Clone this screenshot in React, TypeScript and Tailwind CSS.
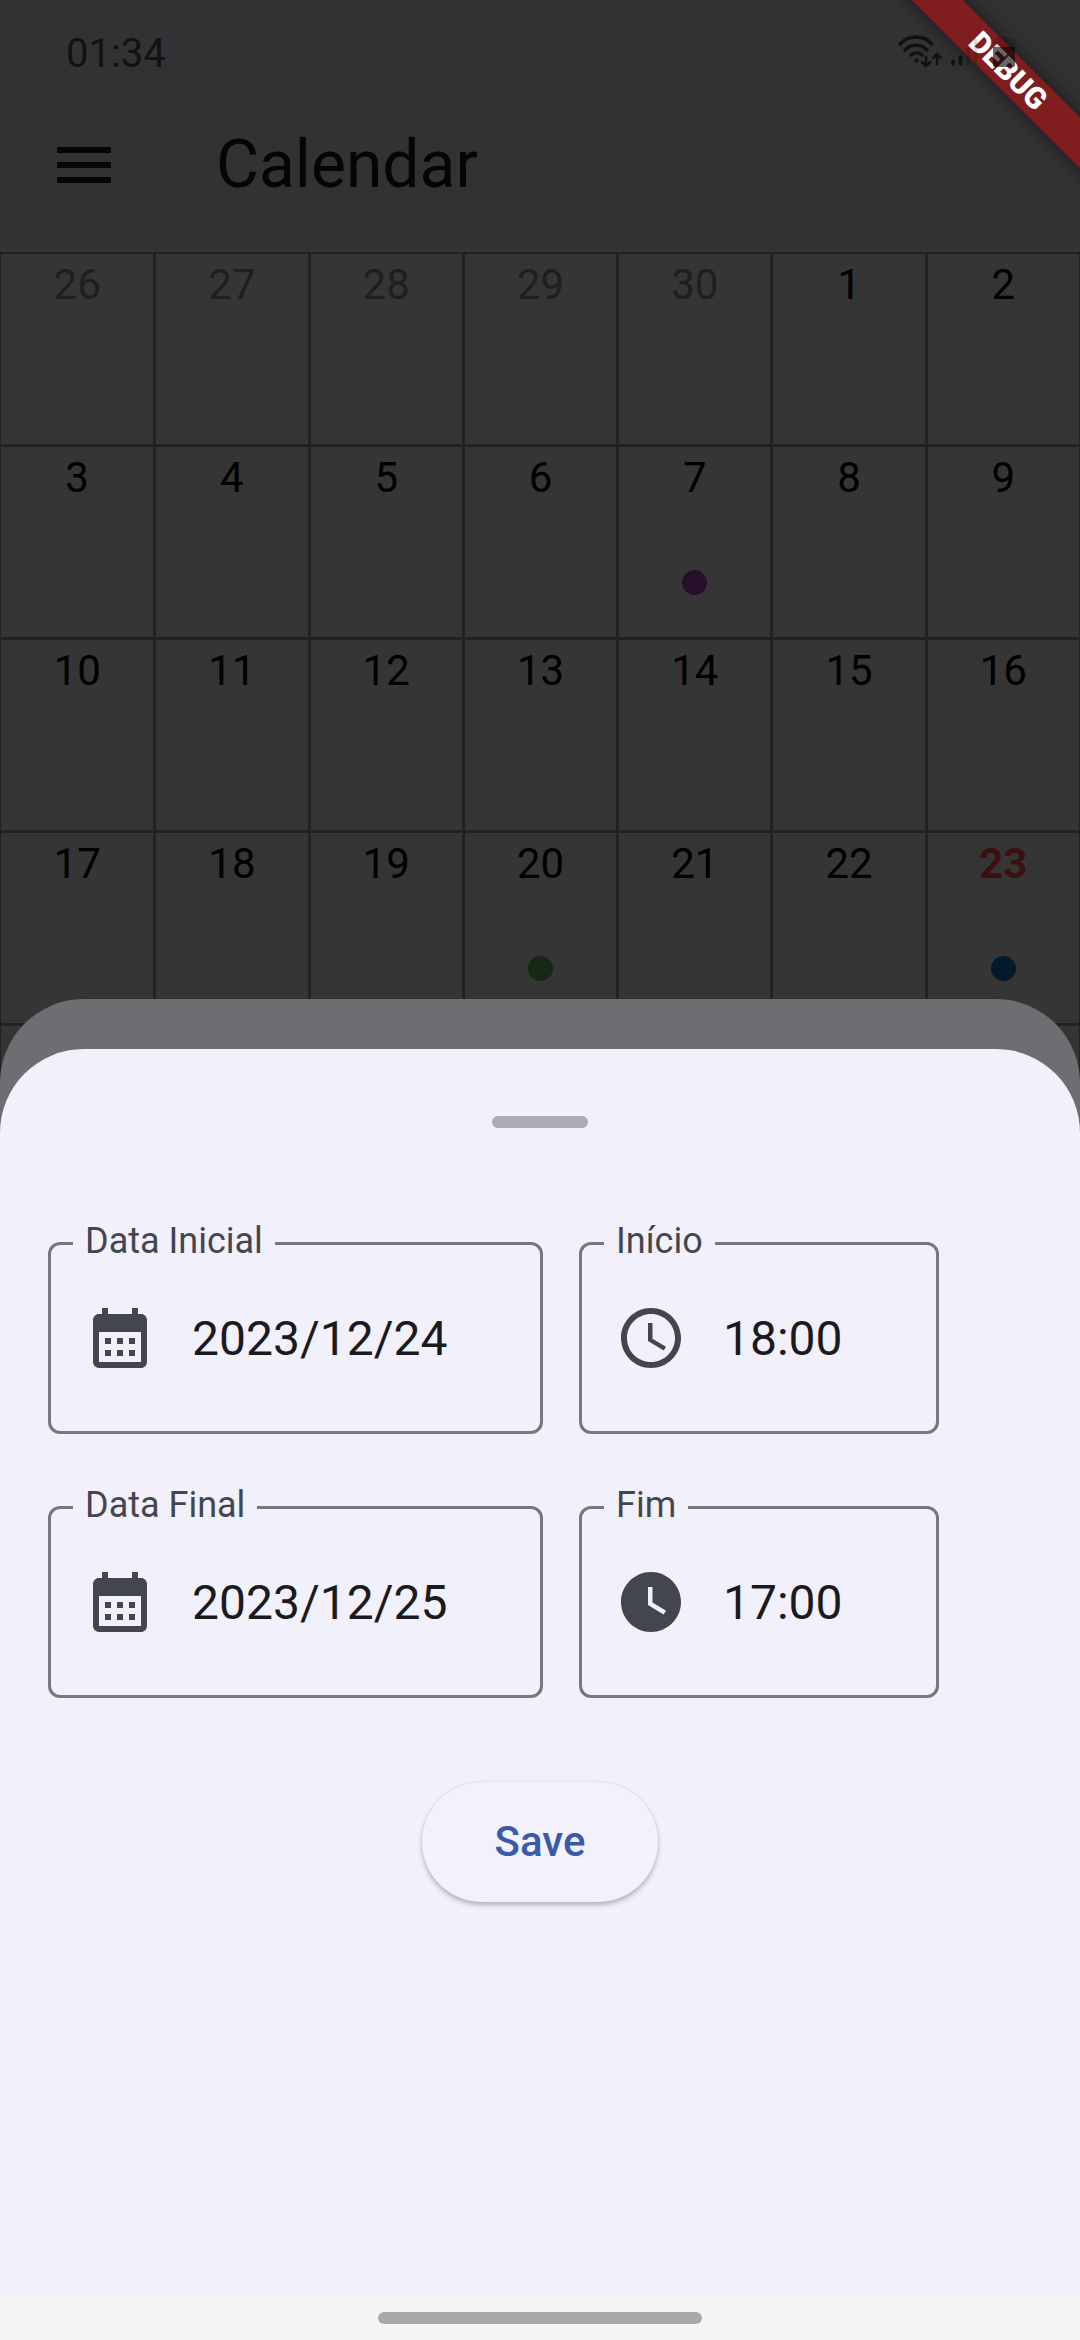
import { useState, type ReactNode } from "react";

type Day = { label: string; tone: "muted" | "normal" | "today"; dot?: string };

const muted = (n: number): Day => ({ label: String(n), tone: "muted" });
const day = (n: number, dot?: string): Day => ({ label: String(n), tone: "normal", dot });
const blank: Day = { label: "", tone: "normal" };

const weeks: Day[][] = [
  [muted(26), muted(27), muted(28), muted(29), muted(30), day(1), day(2)],
  [day(3), day(4), day(5), day(6), day(7, "bg-[#260f29]"), day(8), day(9)],
  [day(10), day(11), day(12), day(13), day(14), day(15), day(16)],
  [
    day(17),
    day(18),
    day(19),
    day(20, "bg-[#172915]"),
    day(21),
    day(22),
    { label: "23", tone: "today", dot: "bg-[#03192c]" },
  ],
  [blank, blank, blank, blank, blank, blank, blank],
];

const toneClass = {
  muted: "text-[#1f1f1f]",
  normal: "text-black",
  today: "font-bold text-[#3a110e]",
};

const calendarPath =
  "M19 4h-1V2h-2v2H8V2H6v2H5c-1.11 0-1.99.9-1.99 2L3 20a2 2 0 0 0 2 2h14c1.1 0 2-.9 2-2V6c0-1.1-.9-2-2-2zm0 16H5V10h14v10zM9 14H7v-2h2v2zm4 0h-2v-2h2v2zm4 0h-2v-2h2v2zm-8 4H7v-2h2v2zm4 0h-2v-2h2v2zm4 0h-2v-2h2v2z";
const clockPath =
  "M11.99 2C6.47 2 2 6.48 2 12s4.47 10 9.99 10C17.52 22 22 17.52 22 12S17.52 2 11.99 2zM12 20c-4.42 0-8-3.58-8-8s3.58-8 8-8 8 3.58 8 8-3.58 8-8 8zm.5-13H11v6l5.25 3.15.75-1.23-4.5-2.67z";
const clockFilledPath =
  "M12 2C6.5 2 2 6.5 2 12s4.5 10 10 10 10-4.5 10-10S17.5 2 12 2zm4.2 14.2L11 13V7h1.5v5.2l4.5 2.7-.8 1.3z";

function Icon({ d }: { d: string }) {
  return (
    <svg viewBox="0 0 24 24" className="size-[72px] shrink-0 fill-[#44464f]" aria-hidden="true">
      <path d={d} />
    </svg>
  );
}

function Field({ id, label, initial, icon }: { id: string; label: string; initial: string; icon: ReactNode }) {
  const [value, setValue] = useState(initial);
  return (
    <div className="relative flex h-48 items-center gap-9 rounded-xl border-3 border-[#767780] px-[33px]">
      <label
        htmlFor={id}
        className="absolute -top-7 left-[22px] bg-[#f2f1fb] px-3 text-[36px] leading-[48px] text-[#44464f]"
      >
        {label}
      </label>
      {icon}
      <input
        id={id}
        value={value}
        onChange={(e) => setValue(e.target.value)}
        className="w-full min-w-0 bg-transparent pt-[2px] text-[48px] leading-[72px] text-[#1b1b1f] outline-none"
      />
    </div>
  );
}

function StatusIcons() {
  return (
    <svg
      viewBox="0 0 120 36"
      className="h-9 w-[120px]"
      fill="none"
      stroke="#000"
      strokeOpacity="0.65"
      strokeLinecap="round"
      aria-hidden="true"
    >
      <path d="M3 12a22 22 0 0 1 32 0" strokeWidth="3.5" />
      <path d="M8 18a15 15 0 0 1 22 0" strokeWidth="3.5" />
      <path d="M14 23a8.500 8.500 0 0 1 11 0" strokeWidth="3.5" />
      <circle cx="19.500" cy="28.500" r="2.200" fill="#000" fillOpacity="0.65" stroke="none" />
      <path d="M29 25v9m-4-4l4 4l4-4M40 32V22m-4 4l4-4l4 4" strokeWidth="2.500" strokeLinejoin="round" />
      <path d="M56 32v-3M63.500 32v-7" strokeWidth="3.500" />
      <path d="M71 32V16M78.500 32V8" strokeWidth="3.500" strokeOpacity="0.15" />
      <path d="M100 4h10v3h8v8H96V7h4z" fill="#000" fillOpacity="0.15" stroke="none" />
      <path d="M96 15h22v19q-1 1-2 1H98q-1 0-2-1z" fill="#000" fillOpacity="0.6" stroke="none" />
    </svg>
  );
}

export default function App() {
  return (
    <div className="relative flex min-h-screen flex-col overflow-hidden bg-[#353535] font-[Roboto,sans-serif]">
      <header className="bg-[#323234]">
        <div className="flex h-[81px] items-center pt-[26px] pl-[66px] text-[40px] leading-[48px] text-[#121212]">
          01:34
        </div>
        <div className="flex h-42 items-center gap-24 px-12">
          <button type="button" aria-label="Open navigation menu" className="size-[72px]">
            <svg viewBox="0 0 24 24" className="size-full fill-[#050505]" aria-hidden="true">
              <path d="M3 18h18v-2H3v2zm0-5h18v-2H3v2zm0-7v2h18V6H3z" />
            </svg>
          </button>
          <h1 className="text-[66px] leading-[84px] text-[#050505]">Calendar</h1>
        </div>
      </header>

      <table className="mt-[3px] w-full table-fixed border-separate border-spacing-0">
        <tbody>
          {weeks.map((week, w) => (
            <tr key={w}>
              {week.map((d, i) => (
                <td
                  key={i}
                  className="h-[193px] border border-t-2 border-l-2 border-[#222222] p-0 pt-px align-top first:border-l"
                >
                  <div className="flex flex-col items-center gap-[62px]">
                    <span className={"text-[42px] leading-[60px] " + toneClass[d.tone]}>{d.label}</span>
                    {d.dot && <span className={"size-[25px] rounded-full " + d.dot} />}
                  </div>
                </td>
              ))}
            </tr>
          ))}
        </tbody>
      </table>

      <div className="absolute inset-0 flex flex-col justify-end">
        <div className="rounded-t-[84px] bg-[#6e6d72] pt-[50px]">
          <section className="flex flex-col items-center rounded-t-[84px] bg-[#f2f1fb] pt-[67px] pb-[393px]">
            <div className="h-3 w-24 rounded-full bg-[#adacb6]" />
            <form
              className="flex w-full flex-col items-center gap-[84px] pt-[114px]"
              onSubmit={(e) => e.preventDefault()}
            >
              <div className="grid w-full grid-cols-[495fr_360fr] gap-x-9 gap-y-[72px] pr-[141px] pl-12">
                <Field id="start-date" label="Data Inicial" initial="2023/12/24" icon={<Icon d={calendarPath} />} />
                <Field id="start-time" label="Início" initial="18:00" icon={<Icon d={clockPath} />} />
                <Field id="end-date" label="Data Final" initial="2023/12/25" icon={<Icon d={calendarPath} />} />
                <Field id="end-time" label="Fim" initial="17:00" icon={<Icon d={clockFilledPath} />} />
              </div>
              <button
                type="submit"
                className="h-30 rounded-full bg-[#f3f1fa] px-[73px] text-[42px] leading-[60px] font-medium text-[#385ca9] shadow-[0_3px_5px_rgba(0,0,0,0.25),0_0_2px_rgba(0,0,0,0.1)]"
              >
                Save
              </button>
            </form>
          </section>
        </div>
        <div className="flex h-[45px] justify-center bg-[#f5f5f8] pt-[17px]">
          <div className="h-3 w-[324px] rounded-full bg-[#a9a9a9]" />
        </div>
      </div>

      <div className="pointer-events-none absolute top-0 right-0 h-60 w-60 overflow-hidden">
        <div className="absolute top-[53px] -right-[88px] flex h-9 w-80 rotate-45 items-center justify-center bg-[#801e1f] text-[30px] leading-9 font-black text-white shadow-[0_0_18px_rgba(0,0,0,0.5)]">
          DEBUG
        </div>
      </div>
      <div className="pointer-events-none absolute top-8 right-[63px]">
        <StatusIcons />
      </div>
    </div>
  );
}
